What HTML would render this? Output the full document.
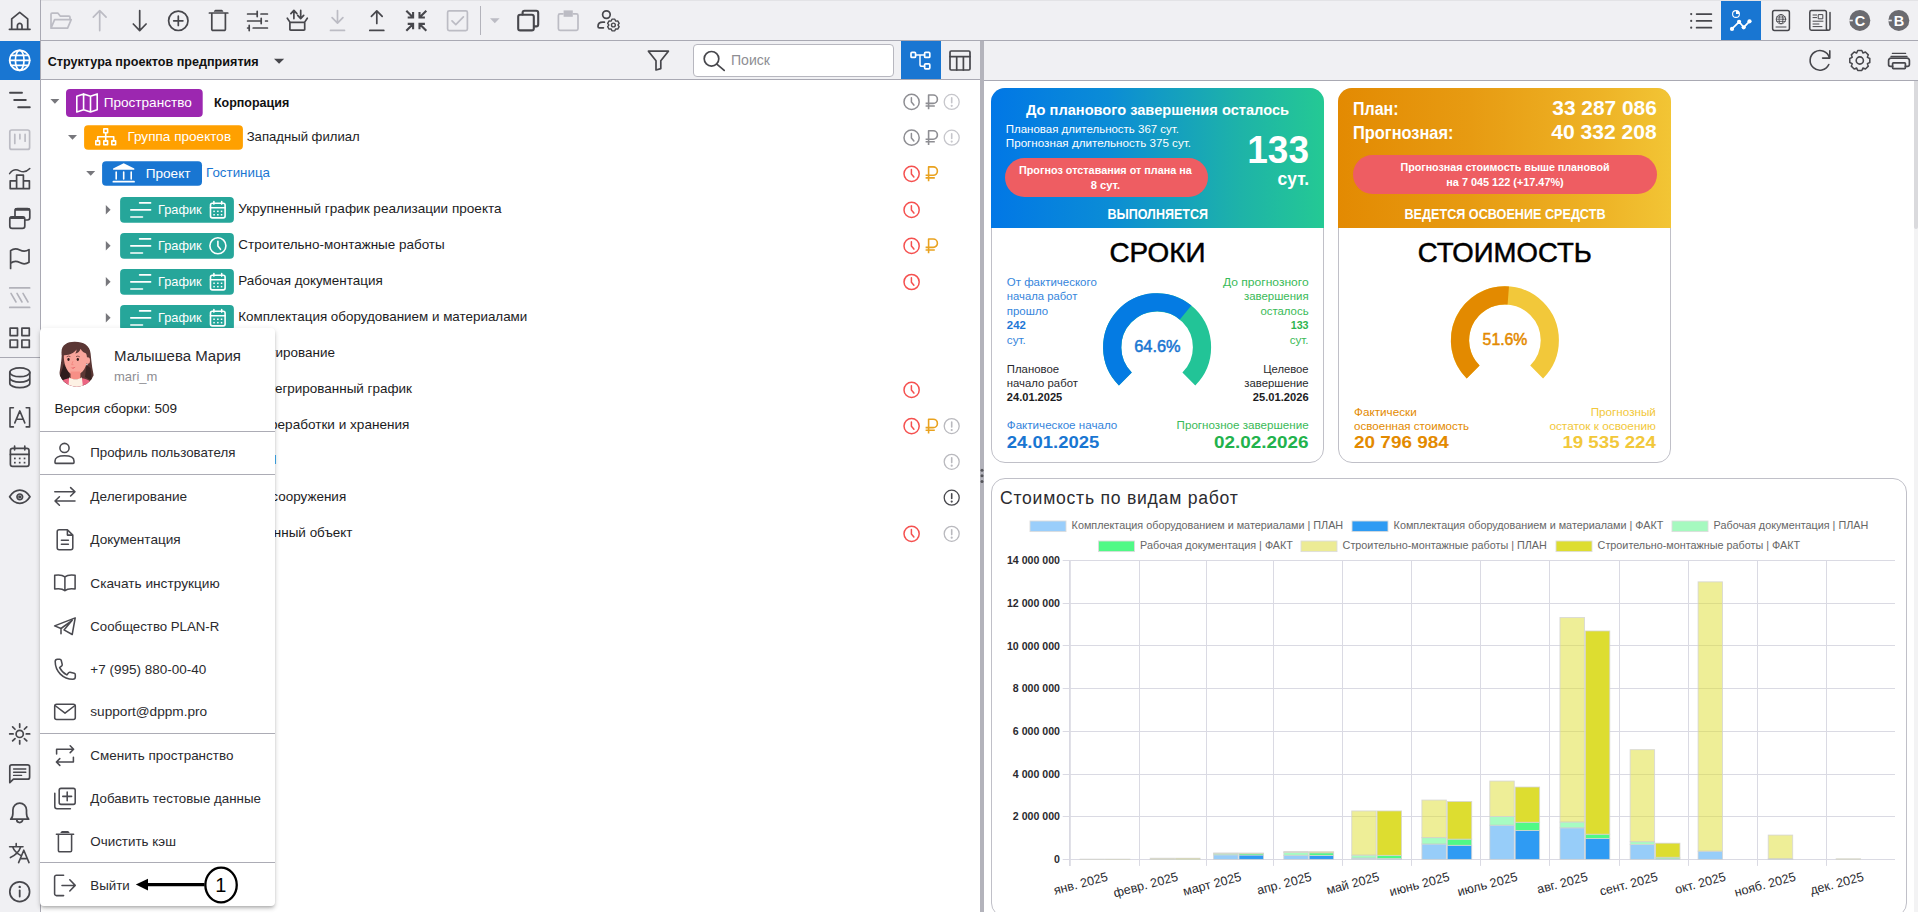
<!DOCTYPE html><html lang="ru"><head><meta charset="utf-8"><title>PLAN-R</title><style>
*{box-sizing:border-box;margin:0;padding:0}
html,body{width:1918px;height:915px;overflow:hidden;background:#fff;font-family:"Liberation Sans",sans-serif;color:#1c1c1e}
.abs{position:absolute}
#top{position:absolute;left:0;top:0;width:1918px;height:41px;background:#f0f0f3;border-bottom:1px solid #a9a9b3;border-top:1px solid #e3e3e6}
#side{position:absolute;left:0;top:0;width:41px;height:915px;background:#f0f0f3;border-right:1px solid #a9a9b3}
#lbar{position:absolute;left:41px;top:41px;width:939px;height:39px;background:#f0f0f3;border-bottom:1px solid #a9a9b3}
#rbar{position:absolute;left:984px;top:41px;width:934px;height:40px;background:#f0f0f3;border-bottom:1px solid #a9a9b3}
#split{position:absolute;left:980px;top:41px;width:4px;height:874px;background:#b3b3bb}
#lpanel{position:absolute;left:41px;top:80px;width:939px;height:835px;background:#fff;overflow:hidden}
#rpanel{position:absolute;left:984px;top:81px;width:934px;height:834px;background:#fff;overflow:hidden}
svg{position:absolute;overflow:visible}
.ic{fill:none;stroke:#47474c;stroke-width:1.7;stroke-linecap:round;stroke-linejoin:round}
.icd{fill:none;stroke:#b9b9c1;stroke-width:1.7;stroke-linecap:round;stroke-linejoin:round}
.t{position:absolute;white-space:nowrap;line-height:1}
</style></head><body>
<div id="top"></div><div id="side"></div><div id="lbar"></div><div id="rbar"></div><div id="lpanel"></div><div id="rpanel"></div><div id="split"></div>
<div class="abs" style="left:0;top:41px;width:40px;height:39px;background:#1976d2"></div>
<div class="abs" style="left:0;top:357px;width:40px;height:1px;background:#a9a9b3"></div>
<div class="abs" style="left:1721px;top:1px;width:40px;height:39px;background:#1976d2"></div>
<div class="abs" style="left:901px;top:41px;width:39.500px;height:38px;background:#1976d2"></div>
<div class="abs" style="left:693px;top:44px;width:201px;height:33px;background:#fff;border:1px solid #b7b7bf;border-radius:4px"></div>
<div class="abs" style="left:480px;top:6px;width:1px;height:29px;background:#b3b3bb"></div>
<svg style="left:0;top:0" width="1918" height="912" viewBox="0 0 1918 912" font-family="Liberation Sans">
<g transform="translate(19.7,20.5)" fill="none" stroke="#47474c" stroke-width="1.700" stroke-linecap="round" stroke-linejoin="round"><path d="M-10.300 8.800 h20.600 M-8 8.800 v-10.400 l8 -6.600 l8 6.600 v10.400 M-2.300 8.800 v-3.600 a2.300 2.300 0 0 1 4.600 0 v3.600"/></g>
<g transform="translate(19.7,60.3)" fill="none" stroke="#fff" stroke-width="1.700" stroke-linecap="round" stroke-linejoin="round"><circle r="10"/><ellipse rx="4.300" ry="10"/><path d="M-10 0 h20 M-8.700 -5 h17.400 M-8.700 5 h17.400"/></g>
<g transform="translate(0.0,0.0)" fill="none" stroke="#47474c" stroke-width="1.700" stroke-linecap="round" stroke-linejoin="round"><path d="M10 92.800 h12 M14.200 100 h11.600 M18.200 107.200 h11.600" stroke-width="1.900"/></g>
<g transform="translate(0.0,0.0)" fill="none" stroke="#bcbcc4" stroke-width="1.700" stroke-linecap="round" stroke-linejoin="round"><rect x="9.800" y="130" width="19.800" height="19.400" rx="2"/><path d="M14.800 134.400 v9 M19.900 134.400 v4.400 M25.100 134.400 v6.800"/></g>
<g transform="translate(0.0,0.0)" fill="none" stroke="#47474c" stroke-width="1.700" stroke-linecap="round" stroke-linejoin="round"><path d="M10.200 188.600 v-7.800 h6.400 v7.800 M16.600 180.800 v-5.600 h6.800 v13.400 M23.400 180.800 h6 v7.800 M10.200 188.600 h19.200"/><path d="M9.600 173.600 c3 -4 6.400 -4.600 10 -2.800 s7.200 1 10.200 -2.200" stroke-width="1.500"/></g>
<g transform="translate(0.0,0.0)" fill="none" stroke="#47474c" stroke-width="1.700" stroke-linecap="round" stroke-linejoin="round"><path d="M15 216 v-5 a2.400 2.400 0 0 1 2.400 -2.400 h10 a2.400 2.400 0 0 1 2.400 2.400 v6.600 a2.400 2.400 0 0 1 -2.400 2.400 h-1.800"/><path d="M16 209.400 h12.800" stroke-width="2.600"/><rect x="9.800" y="216.800" width="15" height="11.600" rx="2.400"/><path d="M11 217.800 h12.600" stroke-width="2.600"/></g>
<g transform="translate(0.0,0.0)" fill="none" stroke="#47474c" stroke-width="1.700" stroke-linecap="round" stroke-linejoin="round"><path d="M10.600 268.400 v-17.800 c3.400 -2.600 6.200 -2.200 9.200 -0.600 s6 1.800 9.200 -0.400 v12.600 c-3.200 2.200 -6.200 2 -9.200 0.400 s-5.800 -2 -9.200 0.600"/></g>
<g transform="translate(0.0,0.0)" fill="none" stroke="#b2b2ba" stroke-width="1.700" stroke-linecap="round" stroke-linejoin="round"><path d="M9.800 287.900 h19.800 M9.800 307.400 h19.800" stroke-width="1.800"/><path d="M11 293.400 l5 8.600 M17 293.400 l5 8.600 M23 293.400 l5 8.600" stroke-width="1.600"/></g>
<g transform="translate(0.0,0.0)" fill="none" stroke="#47474c" stroke-width="1.700" stroke-linecap="round" stroke-linejoin="round"><rect x="10.100" y="328.200" width="7.400" height="7.400"/><rect x="21.900" y="328.200" width="7.400" height="7.400"/><rect x="10.100" y="340" width="7.400" height="7.400"/><rect x="21.900" y="340" width="7.400" height="7.400"/></g>
<g transform="translate(19.8,0.0)" fill="none" stroke="#47474c" stroke-width="1.700" stroke-linecap="round" stroke-linejoin="round"><ellipse cx="0" cy="372.300" rx="10" ry="4.400"/><path d="M-10 372.300 v11 c0 2.400 4.500 4.400 10 4.400 s10 -2 10 -4.400 v-11 M-10 377.800 c0 2.400 4.500 4.400 10 4.400 s10 -2 10 -4.400"/></g>
<g transform="translate(19.8,417.3)" fill="none" stroke="#47474c" stroke-width="1.700" stroke-linecap="round" stroke-linejoin="round"><path d="M-6.400 -9.600 h-3.400 v19.200 h3.400 M6.400 -9.600 h3.400 v19.200 h-3.400 M-5 5.600 l5 -12 l5 12 M-3.400 2 h6.800" stroke-width="1.600"/></g>
<g transform="translate(0.0,0.0)" fill="none" stroke="#47474c" stroke-width="1.700" stroke-linecap="round" stroke-linejoin="round"><rect x="10.400" y="448.400" width="18.600" height="18" rx="2.200"/><path d="M10.400 454.400 h18.600 M14.600 446.200 v3.600 M24.800 446.200 v3.600"/><g stroke="none" fill="#47474c"><rect x="14" y="457.600" width="1.700" height="1.700"/><rect x="18.850" y="457.600" width="1.700" height="1.700"/><rect x="23.700" y="457.600" width="1.700" height="1.700"/><rect x="14" y="461.800" width="1.700" height="1.700"/><rect x="18.850" y="461.800" width="1.700" height="1.700"/><rect x="23.700" y="461.800" width="1.700" height="1.700"/></g></g>
<g transform="translate(19.8,496.8)" fill="none" stroke="#47474c" stroke-width="1.700" stroke-linecap="round" stroke-linejoin="round"><path d="M-10.200 0 c2.800 -4.400 6.200 -6.600 10.200 -6.600 s7.400 2.200 10.200 6.600 c-2.800 4.400 -6.200 6.600 -10.200 6.600 s-7.400 -2.200 -10.200 -6.600z"/><circle r="2.800"/><circle r="0.800" fill="#47474c"/></g>
<g transform="translate(19.7,733.9)" fill="none" stroke="#47474c" stroke-width="1.700" stroke-linecap="round" stroke-linejoin="round"><circle r="3.600"/><path d="M6.60 0.00 L10.00 0.00"/><path d="M4.67 4.67 L7.07 7.07"/><path d="M0.00 6.60 L0.00 10.00"/><path d="M-4.67 4.67 L-7.07 7.07"/><path d="M-6.60 0.00 L-10.00 0.00"/><path d="M-4.67 -4.67 L-7.07 -7.07"/><path d="M-0.00 -6.60 L-0.00 -10.00"/><path d="M4.67 -4.67 L7.07 -7.07"/></g>
<g transform="translate(0.0,0.0)" fill="none" stroke="#47474c" stroke-width="1.700" stroke-linecap="round" stroke-linejoin="round"><path d="M9.800 782.600 v-15.800 a2 2 0 0 1 2 -2 h15.800 a2 2 0 0 1 2 2 v10.400 a2 2 0 0 1 -2 2 h-14.200z"/><path d="M13.600 769 h12.200 M13.600 772.200 h12.200 M13.600 775.400 h8" stroke-width="1.400"/></g>
<g transform="translate(19.7,0.0)" fill="none" stroke="#47474c" stroke-width="1.700" stroke-linecap="round" stroke-linejoin="round"><path d="M-9 819.200 c1.600 -1.200 2.200 -3 2.200 -6.200 v-3 a6.800 6.800 0 0 1 13.600 0 v3 c0 3.200 0.600 5 2.200 6.200z M-3 819.600 a3 3 0 0 0 6 0"/></g>
<g transform="translate(0.0,0.0)" fill="none" stroke="#47474c" stroke-width="1.700" stroke-linecap="round" stroke-linejoin="round"><path d="M9.600 846.800 h13.400 M16.200 843.600 v3.200 M20.800 846.800 c-1.600 4.600 -5.200 8.400 -10.400 10.800 M12.600 846.800 c1.200 3.400 4 6.400 8 8.600 M18.600 862.600 l5.200 -12.400 l5.200 12.400 M20.400 858.600 h6.800" stroke-width="1.600"/></g>
<g transform="translate(19.7,891.7)" fill="none" stroke="#47474c" stroke-width="1.700" stroke-linecap="round" stroke-linejoin="round"><circle r="9.900"/><path d="M0 -1.200 v6" stroke-width="1.800"/><circle cy="-4.800" r="0.600" stroke-width="1.200"/></g>
<g transform="translate(0.0,0.0)" fill="none" stroke="#bcbcc4" stroke-width="1.700" stroke-linecap="round" stroke-linejoin="round"><path d="M51 28.200 v-14 a1 1 0 0 1 1 -1 h6 l2.400 3 h8.600 a1 1 0 0 1 1 1 v2.600 M51 28.200 l3.600 -8.600 h16.600 l-3.600 8.600z"/></g>
<g transform="translate(99.7,0.0)" fill="none" stroke="#bcbcc4" stroke-width="1.700" stroke-linecap="round" stroke-linejoin="round"><path d="M0 30.600 v-19.800 M-6.400 17.200 l6.400 -6.600 l6.400 6.600"/></g>
<g transform="translate(139.7,0.0)" fill="none" stroke="#47474c" stroke-width="1.700" stroke-linecap="round" stroke-linejoin="round"><path d="M0 10.600 v19.800 M-6.400 24 l6.400 6.600 l6.400 -6.600"/></g>
<g transform="translate(178.3,20.8)" fill="none" stroke="#47474c" stroke-width="1.700" stroke-linecap="round" stroke-linejoin="round"><circle r="9.700"/><path d="M-4.600 0 h9.200 M0 -4.600 v9.200"/></g>
<g transform="translate(218.6,0.0)" fill="none" stroke="#47474c" stroke-width="1.700" stroke-linecap="round" stroke-linejoin="round"><path d="M-9.200 13 h18.400 M-6.800 13 v16.200 a1.200 1.200 0 0 0 1.200 1.200 h11.200 a1.200 1.200 0 0 0 1.200 -1.200 v-16.200"/><path d="M-4.800 11.800 c0.400 -1.400 1.200 -2 2.400 -2 h4.800 c1.200 0 2 0.600 2.400 2z" fill="#47474c" stroke="none"/></g>
<g transform="translate(0.0,0.0)" fill="none" stroke="#47474c" stroke-width="1.700" stroke-linecap="round" stroke-linejoin="round"><path d="M247.600 14 h9.600 M261 14 h6.400 M257.200 11.400 v5.200 M247.600 21 h13.600 M265.600 21 h1.800 M261.200 18.400 v5.200 M247.600 28 h1.600 M253.200 28 h14.200 M249.200 25.400 v5.200"/></g>
<g transform="translate(297.3,0.0)" fill="none" stroke="#47474c" stroke-width="1.700" stroke-linecap="round" stroke-linejoin="round"><path d="M-7.400 22.400 v7 a0.800 0.800 0 0 0 0.800 0.800 h13.200 a0.800 0.800 0 0 0 0.800 -0.800 v-7 M-10 18.200 l2.800 4.200 h14.400 l2.800 -4.200 M-3.400 18.600 v-8 M-6.400 13.600 l3 -3.200 l3 3.200 M3.400 10.400 v8 M0.400 15.400 l3 3.200 l3 -3.200"/></g>
<g transform="translate(337.5,0.0)" fill="none" stroke="#bcbcc4" stroke-width="1.700" stroke-linecap="round" stroke-linejoin="round"><path d="M0 10.600 v12.400 M-5.400 17.600 l5.400 5.600 l5.400 -5.600 M-7 30.400 h14"/></g>
<g transform="translate(376.8,0.0)" fill="none" stroke="#47474c" stroke-width="1.700" stroke-linecap="round" stroke-linejoin="round"><path d="M0 23.400 v-12.400 M-5.400 16.400 l5.400 -5.600 l5.400 5.600 M-7 30.400 h14"/></g>
<g transform="translate(416.3,20.7)" fill="none" stroke="#47474c" stroke-width="1.700" stroke-linecap="round" stroke-linejoin="round"><path d="M-10 -10 l6.800 6.800 M-3.200 -8.600 v5.400 h-5.400 M10 -10 l-6.800 6.800 M3.200 -8.600 v5.400 h5.400 M-10 10 l6.800 -6.800 M-3.200 8.600 v-5.400 h-5.400 M10 10 l-6.800 -6.800 M3.200 8.600 v-5.400 h5.400" stroke-linecap="butt" stroke-linejoin="miter" stroke-width="2.1"/></g>
<g transform="translate(0.0,0.0)" fill="none" stroke="#bcbcc4" stroke-width="1.700" stroke-linecap="round" stroke-linejoin="round"><rect x="447.600" y="10.800" width="19.800" height="19.800" rx="1.600"/><path d="M452 20.800 l3.800 3.800 l7.600 -7.800"/></g>
<path d="M490 18.200 h9.600 l-4.800 5z" fill="#bcbcc4"/>
<g transform="translate(0.0,0.0)" fill="none" stroke="#47474c" stroke-width="1.700" stroke-linecap="round" stroke-linejoin="round"><rect x="518.200" y="14.800" width="15.600" height="15.600" rx="2" stroke-width="2.1"/><path d="M522.600 14.400 v-1.600 a2 2 0 0 1 2 -2 h11.600 a2 2 0 0 1 2 2 v11.600 a2 2 0 0 1 -2 2 h-1.800" stroke-width="2.1"/></g>
<g transform="translate(0.0,0.0)" fill="none" stroke="#bcbcc4" stroke-width="1.700" stroke-linecap="round" stroke-linejoin="round"><path d="M563 13.800 h-3 a1.600 1.600 0 0 0 -1.600 1.600 v13.400 a1.600 1.600 0 0 0 1.600 1.600 h16.400 a1.600 1.600 0 0 0 1.600 -1.600 v-13.400 a1.600 1.600 0 0 0 -1.600 -1.600 h-3"/><rect x="563.600" y="10.400" width="9.200" height="6.400" fill="#bcbcc4" stroke="none"/></g>
<g transform="translate(0.0,0.0)" fill="none" stroke="#47474c" stroke-width="1.700" stroke-linecap="round" stroke-linejoin="round"><circle cx="606.400" cy="14.600" r="3.800"/><path d="M604.400 22.200 h-1.600 c-3 0 -4.800 1.800 -4.800 4.200 c0 0.800 0.600 1.400 1.400 1.400 h4"/><path d="M619.16 26.68 L617.73 29.15 L616.00 28.91 L615.49 29.21 L614.83 30.83 L611.97 30.83 L611.31 29.21 L610.80 28.91 L609.07 29.15 L607.64 26.68 L608.71 25.30 L608.71 24.70 L607.64 23.32 L609.07 20.85 L610.80 21.09 L611.31 20.79 L611.97 19.17 L614.83 19.17 L615.49 20.79 L616.00 21.09 L617.73 20.85 L619.16 23.32 L618.09 24.70 L618.09 25.30z" stroke-width="1.400" fill="#f0f0f3"/><circle cx="613.400" cy="25" r="1.900" stroke-width="1.400"/></g>
<text x="47.7" y="65.6" font-size="13.5" font-weight="bold" fill="#111" text-anchor="start" textLength="211.0" lengthAdjust="spacingAndGlyphs" >Структура проектов предприятия</text>
<path d="M274 58.800 h10.200 l-5.100 5z" fill="#47474c"/>
<g transform="translate(0.0,0.0)" fill="none" stroke="#47474c" stroke-width="1.700" stroke-linecap="round" stroke-linejoin="round"><path d="M648.400 51.200 h20 l-7.600 9.600 v7.800 l-4.800 1.400 v-9.200z"/></g>
<g transform="translate(0.0,0.0)" fill="none" stroke="#47474c" stroke-width="1.700" stroke-linecap="round" stroke-linejoin="round"><circle cx="711.500" cy="58.800" r="7.300"/><path d="M716.800 64.200 l7.400 6.200"/></g>
<text x="731.0" y="65.4" font-size="14" font-weight="normal" fill="#8e8e93" text-anchor="start" textLength="39.0" lengthAdjust="spacingAndGlyphs" >Поиск</text>
<g transform="translate(0.0,0.0)" fill="none" stroke="#fff" stroke-width="1.700" stroke-linecap="round" stroke-linejoin="round"><rect x="911" y="52.400" width="4.600" height="5" rx="1"/><rect x="924.600" y="52.400" width="5.200" height="5" rx="1"/><rect x="924.600" y="63.800" width="5.200" height="5" rx="1"/><path d="M915.600 54.900 h9 M920 54.900 v9.600 a1.800 1.800 0 0 0 1.800 1.800 h2.800" stroke-width="1.500"/></g>
<g transform="translate(0.0,0.0)" fill="none" stroke="#47474c" stroke-width="1.700" stroke-linecap="round" stroke-linejoin="round"><rect x="950" y="51" width="20" height="19" rx="1.200"/><path d="M950 56.600 h20 M956.700 56.600 v13.400 M963.400 56.600 v13.400"/></g>
<g transform="translate(0.0,0.0)" fill="none" stroke="#47474c" stroke-width="1.700" stroke-linecap="round" stroke-linejoin="round"><path d="M1696.600 14.100 h14.800 M1696.600 20.900 h14.800 M1696.600 27.700 h14.800" stroke-width="1.700"/><g fill="#47474c" stroke="none"><circle cx="1691.200" cy="14.100" r="1.100"/><circle cx="1691.200" cy="20.900" r="1.100"/><circle cx="1691.200" cy="27.700" r="1.100"/></g></g>
<g transform="translate(0.0,0.0)" fill="none" stroke="#fff" stroke-width="1.700" stroke-linecap="round" stroke-linejoin="round"><path d="M1732 28.900 L1739.100 21.800 L1743.700 27.300 L1749.500 21.300" stroke-width="1.700"/><g fill="#fff" stroke="none"><circle cx="1732" cy="28.900" r="2.100"/><circle cx="1739.100" cy="21.800" r="2.100"/><circle cx="1743.700" cy="27.300" r="2.100"/><circle cx="1749.500" cy="21.300" r="2.100"/></g><circle cx="1736" cy="14" r="3.400" stroke-width="1.100"/><path d="M1736 14 v-3.400 a3.400 3.400 0 0 1 3.400 3.400z" fill="#fff" stroke="none"/></g>
<g transform="translate(0.0,0.0)" fill="none" stroke="#47474c" stroke-width="1.700" stroke-linecap="round" stroke-linejoin="round"><rect x="1772.600" y="10.600" width="16.800" height="19.800" rx="1.800" stroke-width="1.500"/><circle cx="1781" cy="19.200" r="4.700" stroke-width="0.900"/><ellipse cx="1781" cy="19.200" rx="2" ry="4.700" stroke-width="0.800"/><path d="M1776.300 19.200 h9.400 M1776.800 17 h8.400 M1776.800 21.400 h8.400" stroke-width="0.800"/><path d="M1776 27 h10" stroke-width="1"/></g>
<g transform="translate(0.0,0.0)" fill="none" stroke="#47474c" stroke-width="1.700" stroke-linecap="round" stroke-linejoin="round"><path d="M1826.400 30.200 h-15 a1.600 1.600 0 0 1 -1.600 -1.600 v-16.400 a1.600 1.600 0 0 1 1.600 -1.600 h13.400 a1.600 1.600 0 0 1 1.600 1.600 v16.200 a1.800 1.800 0 0 0 3.600 0 v-15.800" stroke-width="1.500"/><rect x="1818.600" y="14.600" width="4.200" height="4.200" stroke-width="1"/><path d="M1813 15 h3.600 M1813 17.600 h3.600 M1813 21.200 h10 M1813 24 h6 M1813 26.600 h9" stroke-width="1"/></g>
<circle cx="1859.8" cy="20.400" r="10.500" fill="#6b6b70"/>
<rect x="1849.2" y="19.700" width="3.600" height="1.600" fill="#f0f0f3"/>
<text x="1860.1" y="25.6" font-size="14.5" font-weight="bold" fill="#fff" text-anchor="middle" >С</text>
<circle cx="1898.8" cy="20.400" r="10.500" fill="#6b6b70"/>
<rect x="1888.2" y="19.700" width="3.600" height="1.600" fill="#f0f0f3"/>
<text x="1899.1" y="25.6" font-size="14.5" font-weight="bold" fill="#fff" text-anchor="middle" >В</text>
<g transform="translate(1819.8,60.5)" fill="none" stroke="#47474c" stroke-width="1.700" stroke-linecap="round" stroke-linejoin="round"><path d="M9.600 -2.600 a9.800 9.800 0 1 0 -0.600 6.600 M10 -9.600 v7.200 h-7.200" stroke-width="1.600"/></g>
<g transform="translate(1859.8,60.5)" fill="none" stroke="#47474c" stroke-width="1.700" stroke-linecap="round" stroke-linejoin="round"><path d="M10.00 -2.03 L10.00 2.03 L7.58 3.12 L7.57 3.16 L8.50 5.64 L5.64 8.50 L3.16 7.57 L3.12 7.58 L2.03 10.00 L-2.03 10.00 L-3.12 7.58 L-3.16 7.57 L-5.64 8.50 L-8.50 5.64 L-7.57 3.16 L-7.58 3.12 L-10.00 2.03 L-10.00 -2.03 L-7.58 -3.12 L-7.57 -3.16 L-8.50 -5.64 L-5.64 -8.50 L-3.16 -7.57 L-3.12 -7.58 L-2.03 -10.00 L2.03 -10.00 L3.12 -7.58 L3.16 -7.57 L5.64 -8.50 L8.50 -5.64 L7.57 -3.16 L7.58 -3.12z" stroke-width="1.500" stroke-linejoin="round"/><circle r="3.600" stroke-width="1.600"/></g>
<g transform="translate(0.0,0.0)" fill="none" stroke="#47474c" stroke-width="1.700" stroke-linecap="round" stroke-linejoin="round"><path d="M1892.400 53.400 h13.200 M1891 56.400 h16" stroke-width="1.300"/><path d="M1892.600 66.400 h-2.200 a1.800 1.800 0 0 1 -1.800 -1.800 v-4.200 a2.200 2.200 0 0 1 2.200 -2.200 h16.400 a2.200 2.200 0 0 1 2.200 2.200 v4.200 a1.800 1.800 0 0 1 -1.800 1.800 h-2.200"/><rect x="1892.600" y="62.800" width="12.800" height="5.800" rx="0.800"/></g>
</svg>
<svg style="left:0;top:0" width="1918" height="912" viewBox="0 0 1918 912" font-family="Liberation Sans">
<path d="M50.4 99.0 h9 l-4.5 4.8z" fill="#77777c"/>
<rect x="66.0" y="89.1" width="136.7" height="27.8" rx="4" fill="#9c27b0"/>
<path d="M76.8 96.2 l6.8 -2.3 l6.9 2.3 l6.7 -2.3 v15.8 l-6.7 2.3 l-6.9 -2.3 l-6.8 2.3z M83.6 93.9 v15.8 M90.5 96.2 v15.8" fill="none" stroke="#fff" stroke-width="1.6" stroke-linecap="round" stroke-linejoin="round"/>
<text x="103.7" y="106.7" font-size="13.3" font-weight="normal" fill="#fff" text-anchor="start" textLength="88.1" lengthAdjust="spacingAndGlyphs" >Пространство</text>
<text x="213.9" y="106.9" font-size="13.6" font-weight="bold" fill="#111" text-anchor="start" textLength="75.3" lengthAdjust="spacingAndGlyphs" >Корпорация</text>
<path d="M68.0 135.0 h9 l-4.5 4.8z" fill="#77777c"/>
<rect x="84.1" y="125.2" width="158.8" height="24.6" rx="4" fill="#ffa000"/>
<g fill="none" stroke="#fff" stroke-width="1.6" stroke-linecap="round" stroke-linejoin="round"><rect x="103.8" y="128.9" width="3.8" height="3.8"/><rect x="95.8" y="140.9" width="3.8" height="3.8"/><rect x="103.8" y="140.9" width="3.8" height="3.8"/><rect x="111.8" y="140.9" width="3.8" height="3.8"/><path d="M105.7 132.7 v8.2 M97.7 140.9 v-4.1 h16 v4.1"/></g>
<text x="127.4" y="141.3" font-size="13.3" font-weight="normal" fill="#fff" text-anchor="start" textLength="103.7" lengthAdjust="spacingAndGlyphs" >Группа проектов</text>
<text x="246.7" y="141.0" font-size="13.3" font-weight="normal" fill="#1c1c1e" text-anchor="start" textLength="113.0" lengthAdjust="spacingAndGlyphs" >Западный филиал</text>
<path d="M86.2 170.9 h9 l-4.5 4.8z" fill="#77777c"/>
<rect x="102.1" y="161.2" width="99.9" height="24.6" rx="4" fill="#1976d2"/>
<path d="M123.7 163.2 l10.6 5.2 v1.4 h-21.2 v-1.4z" fill="#fff"/><g fill="none" stroke="#fff" stroke-width="1.6" stroke-linecap="round" stroke-linejoin="round" stroke-width="2"><path d="M116.2 172 v7 M123.7 172 v7 M131.2 172 v7"/><path d="M113.4 181.7 h20.6" stroke-width="1.8"/></g>
<text x="145.7" y="177.9" font-size="13.3" font-weight="normal" fill="#fff" text-anchor="start" textLength="44.8" lengthAdjust="spacingAndGlyphs" >Проект</text>
<text x="206.1" y="177.0" font-size="13.3" font-weight="normal" fill="#1976d2" text-anchor="start" textLength="63.9" lengthAdjust="spacingAndGlyphs" >Гостиница</text>
<path d="M105.8 204.9 v9.6 l4.8 -4.8z" fill="#77777c"/>
<rect x="120.1" y="197.1" width="113.8" height="25.7" rx="4" fill="#26a69a"/>
<path d="M139.6 202.9 h11 M130.8 209.9 h19.8 M130.8 217.0 h11.7" fill="none" stroke="#fff" stroke-width="1.6" stroke-linecap="round" stroke-linejoin="round" stroke-width="1.7"/>
<text x="158.0" y="214.1" font-size="13.3" font-weight="normal" fill="#fff" text-anchor="start" textLength="43.7" lengthAdjust="spacingAndGlyphs" >График</text>
<g fill="none" stroke="#fff" stroke-width="1.6" stroke-linecap="round" stroke-linejoin="round" stroke-width="1.4"><rect x="210.5" y="203.3" width="14.6" height="14.6" rx="1.8"/><path d="M210.5 207.7 h14.6 M213.9 201.5 v2.6 M221.7 201.5 v2.6"/></g>
<rect x="213.3" y="210.6" width="1.5" height="1.5" fill="#fff"/><rect x="213.3" y="214.0" width="1.5" height="1.5" fill="#fff"/><rect x="217.1" y="210.6" width="1.5" height="1.5" fill="#fff"/><rect x="217.1" y="214.0" width="1.5" height="1.5" fill="#fff"/><rect x="220.8" y="210.6" width="1.5" height="1.5" fill="#fff"/><rect x="220.8" y="214.0" width="1.5" height="1.5" fill="#fff"/>
<text x="238.3" y="213.0" font-size="13.3" font-weight="normal" fill="#1c1c1e" text-anchor="start" textLength="263.3" lengthAdjust="spacingAndGlyphs" >Укрупненный график реализации проекта</text>
<path d="M105.8 240.9 v9.6 l4.8 -4.8z" fill="#77777c"/>
<rect x="120.1" y="233.1" width="113.8" height="25.7" rx="4" fill="#26a69a"/>
<path d="M139.6 238.9 h11 M130.8 245.9 h19.8 M130.8 253.0 h11.7" fill="none" stroke="#fff" stroke-width="1.6" stroke-linecap="round" stroke-linejoin="round" stroke-width="1.7"/>
<text x="158.0" y="250.1" font-size="13.3" font-weight="normal" fill="#fff" text-anchor="start" textLength="43.7" lengthAdjust="spacingAndGlyphs" >График</text>
<g fill="none" stroke="#fff" stroke-width="1.6" stroke-linecap="round" stroke-linejoin="round" stroke-width="1.5"><circle cx="217.9" cy="245.8" r="8"/><path d="M217.9 241.3 v4.8 l2.6 3.2"/></g>
<text x="238.3" y="249.0" font-size="13.3" font-weight="normal" fill="#1c1c1e" text-anchor="start" textLength="206.4" lengthAdjust="spacingAndGlyphs" >Строительно-монтажные работы</text>
<path d="M105.8 276.9 v9.6 l4.8 -4.8z" fill="#77777c"/>
<rect x="120.1" y="269.0" width="113.8" height="25.7" rx="4" fill="#26a69a"/>
<path d="M139.6 274.9 h11 M130.8 281.9 h19.8 M130.8 289.0 h11.7" fill="none" stroke="#fff" stroke-width="1.6" stroke-linecap="round" stroke-linejoin="round" stroke-width="1.7"/>
<text x="158.0" y="286.1" font-size="13.3" font-weight="normal" fill="#fff" text-anchor="start" textLength="43.7" lengthAdjust="spacingAndGlyphs" >График</text>
<g fill="none" stroke="#fff" stroke-width="1.6" stroke-linecap="round" stroke-linejoin="round" stroke-width="1.4"><rect x="210.5" y="275.3" width="14.6" height="14.6" rx="1.8"/><path d="M210.5 279.7 h14.6 M213.9 273.5 v2.6 M221.7 273.5 v2.6"/></g>
<rect x="213.3" y="282.5" width="1.5" height="1.5" fill="#fff"/><rect x="213.3" y="285.9" width="1.5" height="1.5" fill="#fff"/><rect x="217.1" y="282.5" width="1.5" height="1.5" fill="#fff"/><rect x="217.1" y="285.9" width="1.5" height="1.5" fill="#fff"/><rect x="220.8" y="282.5" width="1.5" height="1.5" fill="#fff"/><rect x="220.8" y="285.9" width="1.5" height="1.5" fill="#fff"/>
<text x="238.3" y="285.0" font-size="13.3" font-weight="normal" fill="#1c1c1e" text-anchor="start" textLength="144.4" lengthAdjust="spacingAndGlyphs" >Рабочая документация</text>
<path d="M105.8 312.9 v9.6 l4.8 -4.8z" fill="#77777c"/>
<rect x="120.1" y="305.0" width="113.8" height="25.7" rx="4" fill="#26a69a"/>
<path d="M139.6 310.9 h11 M130.8 317.9 h19.8 M130.8 325.0 h11.7" fill="none" stroke="#fff" stroke-width="1.6" stroke-linecap="round" stroke-linejoin="round" stroke-width="1.7"/>
<text x="158.0" y="322.1" font-size="13.3" font-weight="normal" fill="#fff" text-anchor="start" textLength="43.7" lengthAdjust="spacingAndGlyphs" >График</text>
<g fill="none" stroke="#fff" stroke-width="1.6" stroke-linecap="round" stroke-linejoin="round" stroke-width="1.4"><rect x="210.5" y="311.3" width="14.6" height="14.6" rx="1.8"/><path d="M210.5 315.7 h14.6 M213.9 309.5 v2.6 M221.7 309.5 v2.6"/></g>
<rect x="213.3" y="318.5" width="1.5" height="1.5" fill="#fff"/><rect x="213.3" y="321.9" width="1.5" height="1.5" fill="#fff"/><rect x="217.1" y="318.5" width="1.5" height="1.5" fill="#fff"/><rect x="217.1" y="321.9" width="1.5" height="1.5" fill="#fff"/><rect x="220.8" y="318.5" width="1.5" height="1.5" fill="#fff"/><rect x="220.8" y="321.9" width="1.5" height="1.5" fill="#fff"/>
<text x="238.3" y="321.0" font-size="13.3" font-weight="normal" fill="#1c1c1e" text-anchor="start" textLength="289.0" lengthAdjust="spacingAndGlyphs" >Комплектация оборудованием и материалами</text>
<text x="335.0" y="357.0" font-size="13.3" font-weight="normal" fill="#1c1c1e" text-anchor="end" textLength="103.8" lengthAdjust="spacingAndGlyphs" >Проектирование</text>
<text x="412.0" y="393.0" font-size="13.3" font-weight="normal" fill="#1c1c1e" text-anchor="end" textLength="160.2" lengthAdjust="spacingAndGlyphs" >Интегрированный график</text>
<text x="409.4" y="429.0" font-size="13.3" font-weight="normal" fill="#1c1c1e" text-anchor="end" textLength="218.5" lengthAdjust="spacingAndGlyphs" >Комплекс переработки и хранения</text>
<text x="346.2" y="500.8" font-size="13.3" font-weight="normal" fill="#1c1c1e" text-anchor="end" textLength="141.1" lengthAdjust="spacingAndGlyphs" >Очистные сооружения</text>
<text x="352.5" y="536.8" font-size="13.3" font-weight="normal" fill="#1c1c1e" text-anchor="end" textLength="181.1" lengthAdjust="spacingAndGlyphs" >Законсервированный объект</text>
<text x="276.7" y="464.0" font-size="13.3" font-weight="normal" fill="#1976d2" text-anchor="end" >Корпус Н</text>
<g fill="none" stroke="#8e8e93" stroke-width="1.5" stroke-linecap="round" stroke-linejoin="round"><circle cx="911.6" cy="101.9" r="7.6"/><path d="M911.4 97.7 v4.4 l2.5 3"/></g>
<g fill="none" stroke="#8e8e93" stroke-width="1.6" stroke-linejoin="round"><path d="M928.6 109.3 v-14.3 h4.6 a4.2 4.2 0 0 1 0 8.4 h-7.6 M925.6 106.0 h9.2"/></g>
<g fill="none" stroke="#c6c6cb" stroke-width="1.3" stroke-linecap="round"><circle cx="951.7" cy="101.9" r="7.5"/><path d="M951.7 97.9 v4.8" stroke-width="1.6"/><circle cx="951.7" cy="105.8" r="0.5" stroke-width="1.2"/></g>
<g fill="none" stroke="#8e8e93" stroke-width="1.5" stroke-linecap="round" stroke-linejoin="round"><circle cx="911.6" cy="137.7" r="7.6"/><path d="M911.4 133.5 v4.4 l2.5 3"/></g>
<g fill="none" stroke="#8e8e93" stroke-width="1.6" stroke-linejoin="round"><path d="M928.6 145.1 v-14.3 h4.6 a4.2 4.2 0 0 1 0 8.4 h-7.6 M925.6 141.8 h9.2"/></g>
<g fill="none" stroke="#c6c6cb" stroke-width="1.3" stroke-linecap="round"><circle cx="951.7" cy="137.7" r="7.5"/><path d="M951.7 133.7 v4.8" stroke-width="1.6"/><circle cx="951.7" cy="141.6" r="0.5" stroke-width="1.2"/></g>
<g fill="none" stroke="#f5504f" stroke-width="1.5" stroke-linecap="round" stroke-linejoin="round"><circle cx="911.6" cy="173.8" r="7.6"/><path d="M911.4 169.6 v4.4 l2.5 3"/></g>
<g fill="none" stroke="#e9a21f" stroke-width="1.6" stroke-linejoin="round"><path d="M928.6 181.2 v-14.3 h4.6 a4.2 4.2 0 0 1 0 8.4 h-7.6 M925.6 177.9 h9.2"/></g>
<g fill="none" stroke="#f5504f" stroke-width="1.5" stroke-linecap="round" stroke-linejoin="round"><circle cx="911.6" cy="209.9" r="7.6"/><path d="M911.4 205.7 v4.4 l2.5 3"/></g>
<g fill="none" stroke="#f5504f" stroke-width="1.5" stroke-linecap="round" stroke-linejoin="round"><circle cx="911.6" cy="245.9" r="7.6"/><path d="M911.4 241.7 v4.4 l2.5 3"/></g>
<g fill="none" stroke="#e9a21f" stroke-width="1.6" stroke-linejoin="round"><path d="M928.6 253.3 v-14.3 h4.6 a4.2 4.2 0 0 1 0 8.4 h-7.6 M925.6 250.0 h9.2"/></g>
<g fill="none" stroke="#f5504f" stroke-width="1.5" stroke-linecap="round" stroke-linejoin="round"><circle cx="911.6" cy="282.0" r="7.6"/><path d="M911.4 277.8 v4.4 l2.5 3"/></g>
<g fill="none" stroke="#f5504f" stroke-width="1.5" stroke-linecap="round" stroke-linejoin="round"><circle cx="911.6" cy="389.9" r="7.6"/><path d="M911.4 385.7 v4.4 l2.5 3"/></g>
<g fill="none" stroke="#f5504f" stroke-width="1.5" stroke-linecap="round" stroke-linejoin="round"><circle cx="911.6" cy="426.1" r="7.6"/><path d="M911.4 421.9 v4.4 l2.5 3"/></g>
<g fill="none" stroke="#e9a21f" stroke-width="1.6" stroke-linejoin="round"><path d="M928.6 433.5 v-14.3 h4.6 a4.2 4.2 0 0 1 0 8.4 h-7.6 M925.6 430.2 h9.2"/></g>
<g fill="none" stroke="#b9b9be" stroke-width="1.3" stroke-linecap="round"><circle cx="951.7" cy="426.1" r="7.5"/><path d="M951.7 422.1 v4.8" stroke-width="1.6"/><circle cx="951.7" cy="430.0" r="0.5" stroke-width="1.2"/></g>
<g fill="none" stroke="#b9b9be" stroke-width="1.3" stroke-linecap="round"><circle cx="951.7" cy="461.8" r="7.5"/><path d="M951.7 457.8 v4.8" stroke-width="1.6"/><circle cx="951.7" cy="465.7" r="0.5" stroke-width="1.2"/></g>
<g fill="none" stroke="#48484d" stroke-width="1.3" stroke-linecap="round"><circle cx="951.7" cy="497.7" r="7.5"/><path d="M951.7 493.7 v4.8" stroke-width="1.6"/><circle cx="951.7" cy="501.6" r="0.5" stroke-width="1.2"/></g>
<g fill="none" stroke="#f5504f" stroke-width="1.5" stroke-linecap="round" stroke-linejoin="round"><circle cx="911.6" cy="533.8" r="7.6"/><path d="M911.4 529.6 v4.4 l2.5 3"/></g>
<g fill="none" stroke="#b9b9be" stroke-width="1.3" stroke-linecap="round"><circle cx="951.7" cy="533.8" r="7.5"/><path d="M951.7 529.8 v4.8" stroke-width="1.6"/><circle cx="951.7" cy="537.7" r="0.5" stroke-width="1.2"/></g>
<circle cx="982" cy="470.2" r="1.5" fill="#55555a"/>
<circle cx="982" cy="475.8" r="1.5" fill="#55555a"/>
<circle cx="982" cy="481.4" r="1.5" fill="#55555a"/>
</svg>
<div class="abs" style="left:991.0px;top:88px;width:333.2px;height:374.6px;border:1px solid #c0c0c8;border-radius:14px;background:#fff"></div>
<div class="abs" style="left:991.0px;top:88px;width:333.2px;height:140px;border-radius:14px 14px 0 0;background:linear-gradient(90deg,#0177e6 0%,#0b8cd6 35%,#1eb3a8 75%,#24c994 100%)"></div>
<div class="abs" style="left:1338.0px;top:88px;width:333.2px;height:374.6px;border:1px solid #c0c0c8;border-radius:14px;background:#fff"></div>
<div class="abs" style="left:1338.0px;top:88px;width:333.2px;height:140px;border-radius:14px 14px 0 0;background:linear-gradient(90deg,#e38a02 0%,#e79b12 40%,#eeb427 80%,#f2c535 100%)"></div>
<div class="abs" style="left:1005.3px;top:158px;width:203.2px;height:39px;border-radius:20px;background:#ee5d62"></div>
<div class="abs" style="left:1353px;top:155px;width:304.4px;height:38.8px;border-radius:20px;background:#ee5d62"></div>
<svg style="left:0;top:0" width="1918" height="912" viewBox="0 0 1918 912" font-family="Liberation Sans">
<text x="1157.5" y="114.5" font-size="14.4" font-weight="bold" fill="#fff" text-anchor="middle" textLength="263.0" lengthAdjust="spacingAndGlyphs" >До планового завершения осталось</text>
<text x="1005.8" y="133.1" font-size="11.7" font-weight="normal" fill="#fff" text-anchor="start" textLength="173.2" lengthAdjust="spacingAndGlyphs" >Плановая длительность 367 сут.</text>
<text x="1005.8" y="147.1" font-size="11.7" font-weight="normal" fill="#fff" text-anchor="start" textLength="185.2" lengthAdjust="spacingAndGlyphs" >Прогнозная длительность 375 сут.</text>
<text x="1309.0" y="162.6" font-size="39" font-weight="bold" fill="#fff" text-anchor="end" textLength="61.7" lengthAdjust="spacingAndGlyphs" >133</text>
<text x="1309.0" y="185.4" font-size="18.8" font-weight="bold" fill="#fff" text-anchor="end" textLength="31.5" lengthAdjust="spacingAndGlyphs" >сут.</text>
<text x="1105.4" y="174.4" font-size="11.2" font-weight="bold" fill="#fff" text-anchor="middle" textLength="173.0" lengthAdjust="spacingAndGlyphs" >Прогноз отставания от плана на</text>
<text x="1105.4" y="188.9" font-size="11.2" font-weight="bold" fill="#fff" text-anchor="middle" >8 сут.</text>
<text x="1157.7" y="218.6" font-size="13.8" font-weight="bold" fill="#fff" text-anchor="middle" textLength="100.6" lengthAdjust="spacingAndGlyphs" >ВЫПОЛНЯЕТСЯ</text>
<text x="1157.5" y="261.9" font-size="27.5" font-weight="normal" fill="#000" text-anchor="middle" textLength="96.0" lengthAdjust="spacingAndGlyphs" stroke="#000" stroke-width="0.5">СРОКИ</text>
<text x="1006.8" y="285.7" font-size="11.7" font-weight="normal" fill="#3585dc" text-anchor="start" textLength="90.0" lengthAdjust="spacingAndGlyphs" >От фактического</text>
<text x="1308.6" y="285.7" font-size="11.7" font-weight="normal" fill="#3aba58" text-anchor="end" textLength="85.6" lengthAdjust="spacingAndGlyphs" >До прогнозного</text>
<text x="1006.8" y="300.2" font-size="11.7" font-weight="normal" fill="#3585dc" text-anchor="start" textLength="70.5" lengthAdjust="spacingAndGlyphs" >начала работ</text>
<text x="1308.6" y="300.2" font-size="11.7" font-weight="normal" fill="#3aba58" text-anchor="end" textLength="64.7" lengthAdjust="spacingAndGlyphs" >завершения</text>
<text x="1006.8" y="314.7" font-size="11.7" font-weight="normal" fill="#3585dc" text-anchor="start" textLength="41.3" lengthAdjust="spacingAndGlyphs" >прошло</text>
<text x="1308.6" y="314.7" font-size="11.7" font-weight="normal" fill="#3aba58" text-anchor="end" textLength="48.2" lengthAdjust="spacingAndGlyphs" >осталось</text>
<text x="1006.8" y="329.2" font-size="11.7" font-weight="bold" fill="#1f78d6" text-anchor="start" textLength="19.0" lengthAdjust="spacingAndGlyphs" >242</text>
<text x="1308.6" y="329.2" font-size="11.7" font-weight="bold" fill="#2fb550" text-anchor="end" textLength="17.9" lengthAdjust="spacingAndGlyphs" >133</text>
<text x="1006.8" y="343.7" font-size="11.7" font-weight="normal" fill="#3585dc" text-anchor="start" textLength="19.0" lengthAdjust="spacingAndGlyphs" >сут.</text>
<text x="1308.6" y="343.7" font-size="11.7" font-weight="normal" fill="#3aba58" text-anchor="end" textLength="18.8" lengthAdjust="spacingAndGlyphs" >сут.</text>
<text x="1006.8" y="372.9" font-size="11.7" font-weight="normal" fill="#2a2a2e" text-anchor="start" textLength="52.3" lengthAdjust="spacingAndGlyphs" >Плановое</text>
<text x="1006.8" y="386.9" font-size="11.7" font-weight="normal" fill="#2a2a2e" text-anchor="start" textLength="71.1" lengthAdjust="spacingAndGlyphs" >начало работ</text>
<text x="1006.8" y="400.7" font-size="11.3" font-weight="bold" fill="#1c1c1e" text-anchor="start" textLength="55.5" lengthAdjust="spacingAndGlyphs" >24.01.2025</text>
<text x="1308.6" y="372.9" font-size="11.7" font-weight="normal" fill="#2a2a2e" text-anchor="end" textLength="45.4" lengthAdjust="spacingAndGlyphs" >Целевое</text>
<text x="1308.6" y="386.9" font-size="11.7" font-weight="normal" fill="#2a2a2e" text-anchor="end" textLength="64.3" lengthAdjust="spacingAndGlyphs" >завершение</text>
<text x="1308.6" y="400.7" font-size="11.3" font-weight="bold" fill="#1c1c1e" text-anchor="end" textLength="55.8" lengthAdjust="spacingAndGlyphs" >25.01.2026</text>
<text x="1006.8" y="429.4" font-size="11.7" font-weight="normal" fill="#3585dc" text-anchor="start" textLength="110.5" lengthAdjust="spacingAndGlyphs" >Фактическое начало</text>
<text x="1308.6" y="429.4" font-size="11.7" font-weight="normal" fill="#3aba58" text-anchor="end" textLength="132.0" lengthAdjust="spacingAndGlyphs" >Прогнозное завершение</text>
<text x="1006.8" y="447.7" font-size="17.4" font-weight="bold" fill="#1976d2" text-anchor="start" textLength="92.5" lengthAdjust="spacingAndGlyphs" >24.01.2025</text>
<text x="1308.6" y="447.7" font-size="17.4" font-weight="bold" fill="#22b24c" text-anchor="end" textLength="94.5" lengthAdjust="spacingAndGlyphs" >02.02.2026</text>
<path d="M1125.35 378.95 A44.90 44.90 0 1 1 1188.85 378.95" fill="none" stroke="#22c497" stroke-width="18.2"/>
<path d="M1125.35 378.95 A44.90 44.90 0 0 1 1185.61 312.51" fill="none" stroke="#047be3" stroke-width="18.2"/>
<text x="1157.4" y="351.8" font-size="16" font-weight="normal" fill="#1976d2" text-anchor="middle" textLength="46.3" lengthAdjust="spacingAndGlyphs" stroke="#1976d2" stroke-width="0.5">64.6%</text>
<text x="1353.0" y="114.5" font-size="17.6" font-weight="bold" fill="#fff" text-anchor="start" textLength="45.5" lengthAdjust="spacingAndGlyphs" >План:</text>
<text x="1353.0" y="138.6" font-size="17.6" font-weight="bold" fill="#fff" text-anchor="start" textLength="100.5" lengthAdjust="spacingAndGlyphs" >Прогнозная:</text>
<text x="1656.8" y="115.0" font-size="19.8" font-weight="bold" fill="#fff" text-anchor="end" textLength="104.5" lengthAdjust="spacingAndGlyphs" >33 287 086</text>
<text x="1656.8" y="139.0" font-size="19.8" font-weight="bold" fill="#fff" text-anchor="end" textLength="105.5" lengthAdjust="spacingAndGlyphs" >40 332 208</text>
<text x="1505.0" y="171.4" font-size="10.8" font-weight="bold" fill="#fff" text-anchor="middle" textLength="209.0" lengthAdjust="spacingAndGlyphs" >Прогнозная стоимость выше плановой</text>
<text x="1505.0" y="186.3" font-size="10.8" font-weight="bold" fill="#fff" text-anchor="middle" textLength="117.5" lengthAdjust="spacingAndGlyphs" >на 7 045 122 (+17.47%)</text>
<text x="1505.0" y="218.6" font-size="13.8" font-weight="bold" fill="#fff" text-anchor="middle" textLength="201.0" lengthAdjust="spacingAndGlyphs" >ВЕДЕТСЯ ОСВОЕНИЕ СРЕДСТВ</text>
<text x="1504.8" y="261.9" font-size="27.5" font-weight="normal" fill="#000" text-anchor="middle" textLength="174.0" lengthAdjust="spacingAndGlyphs" stroke="#000" stroke-width="0.5">СТОИМОСТЬ</text>
<text x="1354.1" y="415.6" font-size="11.7" font-weight="normal" fill="#e38a00" text-anchor="start" >Фактически</text>
<text x="1354.1" y="429.8" font-size="11.7" font-weight="normal" fill="#e38a00" text-anchor="start" textLength="115.0" lengthAdjust="spacingAndGlyphs" >освоенная стоимость</text>
<text x="1354.1" y="447.7" font-size="17.4" font-weight="bold" fill="#e38a00" text-anchor="start" textLength="94.6" lengthAdjust="spacingAndGlyphs" >20 796 984</text>
<text x="1655.9" y="415.6" font-size="11.7" font-weight="normal" fill="#f2c83a" text-anchor="end" >Прогнозный</text>
<text x="1655.9" y="429.8" font-size="11.7" font-weight="normal" fill="#f2c83a" text-anchor="end" textLength="106.5" lengthAdjust="spacingAndGlyphs" >остаток к освоению</text>
<text x="1655.9" y="447.7" font-size="17.4" font-weight="bold" fill="#f2c83a" text-anchor="end" textLength="93.5" lengthAdjust="spacingAndGlyphs" >19 535 224</text>
<path d="M1473.15 372.05 A44.90 44.90 0 1 1 1536.65 372.05" fill="none" stroke="#f2c83a" stroke-width="18.2"/>
<path d="M1473.15 372.05 A44.90 44.90 0 0 1 1508.28 295.53" fill="none" stroke="#e38a00" stroke-width="18.2"/>
<text x="1505.0" y="344.9" font-size="16" font-weight="normal" fill="#e38a00" text-anchor="middle" textLength="44.8" lengthAdjust="spacingAndGlyphs" stroke="#e38a00" stroke-width="0.5">51.6%</text>
</svg>
<div class="abs" style="left:984px;top:81px;width:930px;height:831px;overflow:hidden"><div class="abs" style="left:7px;top:397px;width:916px;height:439px;border:1px solid #c0c0c8;border-radius:14px;background:#fff"></div></div>
<div class="t" style="left:1000px;top:490px;font-size:17.6px;color:#2c2c30;letter-spacing:0.75px">Стоимость по видам работ</div>
<svg style="left:0;top:0" width="1918" height="912" viewBox="0 0 1918 912">
<line x1="1062.7" x2="1895.0" y1="560.50" y2="560.50" stroke="#dadae3" stroke-width="1"/>
<line x1="1062.7" x2="1895.0" y1="603.50" y2="603.50" stroke="#dadae3" stroke-width="1"/>
<line x1="1062.7" x2="1895.0" y1="645.50" y2="645.50" stroke="#dadae3" stroke-width="1"/>
<line x1="1062.7" x2="1895.0" y1="688.50" y2="688.50" stroke="#dadae3" stroke-width="1"/>
<line x1="1062.7" x2="1895.0" y1="731.50" y2="731.50" stroke="#dadae3" stroke-width="1"/>
<line x1="1062.7" x2="1895.0" y1="774.50" y2="774.50" stroke="#dadae3" stroke-width="1"/>
<line x1="1062.7" x2="1895.0" y1="816.50" y2="816.50" stroke="#dadae3" stroke-width="1"/>
<line x1="1062.7" x2="1895.0" y1="859.50" y2="859.50" stroke="#dadae3" stroke-width="1"/>
<line x1="1069.90" x2="1069.90" y1="560.5" y2="865.9" stroke="#dadae3" stroke-width="1.8"/>
<line x1="1139.50" x2="1139.50" y1="560.5" y2="865.9" stroke="#dadae3" stroke-width="1"/>
<line x1="1206.50" x2="1206.50" y1="560.5" y2="865.9" stroke="#dadae3" stroke-width="1"/>
<line x1="1273.50" x2="1273.50" y1="560.5" y2="865.9" stroke="#dadae3" stroke-width="1"/>
<line x1="1342.50" x2="1342.50" y1="560.5" y2="865.9" stroke="#dadae3" stroke-width="1"/>
<line x1="1411.50" x2="1411.50" y1="560.5" y2="865.9" stroke="#dadae3" stroke-width="1"/>
<line x1="1480.50" x2="1480.50" y1="560.5" y2="865.9" stroke="#dadae3" stroke-width="1"/>
<line x1="1549.50" x2="1549.50" y1="560.5" y2="865.9" stroke="#dadae3" stroke-width="1"/>
<line x1="1619.50" x2="1619.50" y1="560.5" y2="865.9" stroke="#dadae3" stroke-width="1"/>
<line x1="1688.50" x2="1688.50" y1="560.5" y2="865.9" stroke="#dadae3" stroke-width="1"/>
<line x1="1757.50" x2="1757.50" y1="560.5" y2="865.9" stroke="#dadae3" stroke-width="1"/>
<line x1="1826.50" x2="1826.50" y1="560.5" y2="865.9" stroke="#dadae3" stroke-width="1"/>
<rect x="1080.08" y="859.14" width="24.45" height="0.30" fill="#dddd30" fill-opacity="0.5" stroke="#d4d4d4" stroke-opacity="0.85" stroke-width="0.9"/>
<rect x="1105.44" y="859.14" width="24.45" height="0.30" fill="#dddd30" fill-opacity="1" stroke="#d4d4d4" stroke-opacity="0.85" stroke-width="0.9"/>
<rect x="1150.26" y="859.19" width="24.45" height="0.30" fill="#50f986" fill-opacity="0.5" stroke="#d4d4d4" stroke-opacity="0.85" stroke-width="0.9"/>
<rect x="1150.26" y="858.23" width="24.45" height="0.96" fill="#dddd30" fill-opacity="0.5" stroke="#d4d4d4" stroke-opacity="0.85" stroke-width="0.9"/>
<rect x="1175.61" y="859.19" width="24.45" height="0.30" fill="#50f986" fill-opacity="1" stroke="#d4d4d4" stroke-opacity="0.85" stroke-width="0.9"/>
<rect x="1175.61" y="858.23" width="24.45" height="0.96" fill="#dddd30" fill-opacity="1" stroke="#d4d4d4" stroke-opacity="0.85" stroke-width="0.9"/>
<rect x="1213.64" y="854.81" width="24.45" height="4.59" fill="#2f9bf3" fill-opacity="0.5" stroke="#d4d4d4" stroke-opacity="0.85" stroke-width="0.9"/>
<rect x="1213.64" y="853.32" width="24.45" height="1.49" fill="#50f986" fill-opacity="0.5" stroke="#d4d4d4" stroke-opacity="0.85" stroke-width="0.9"/>
<rect x="1213.64" y="853.00" width="24.45" height="0.32" fill="#dddd30" fill-opacity="0.5" stroke="#d4d4d4" stroke-opacity="0.85" stroke-width="0.9"/>
<rect x="1238.99" y="855.02" width="24.45" height="4.38" fill="#2f9bf3" fill-opacity="1" stroke="#d4d4d4" stroke-opacity="0.85" stroke-width="0.9"/>
<rect x="1238.99" y="853.53" width="24.45" height="1.49" fill="#50f986" fill-opacity="1" stroke="#d4d4d4" stroke-opacity="0.85" stroke-width="0.9"/>
<rect x="1238.99" y="853.00" width="24.45" height="0.53" fill="#dddd30" fill-opacity="1" stroke="#d4d4d4" stroke-opacity="0.85" stroke-width="0.9"/>
<rect x="1283.81" y="855.34" width="24.45" height="4.06" fill="#2f9bf3" fill-opacity="0.5" stroke="#d4d4d4" stroke-opacity="0.85" stroke-width="0.9"/>
<rect x="1283.81" y="852.35" width="24.45" height="2.99" fill="#50f986" fill-opacity="0.5" stroke="#d4d4d4" stroke-opacity="0.85" stroke-width="0.9"/>
<rect x="1283.81" y="851.50" width="24.45" height="0.85" fill="#dddd30" fill-opacity="0.5" stroke="#d4d4d4" stroke-opacity="0.85" stroke-width="0.9"/>
<rect x="1309.16" y="855.45" width="24.45" height="3.95" fill="#2f9bf3" fill-opacity="1" stroke="#d4d4d4" stroke-opacity="0.85" stroke-width="0.9"/>
<rect x="1309.16" y="852.78" width="24.45" height="2.67" fill="#50f986" fill-opacity="1" stroke="#d4d4d4" stroke-opacity="0.85" stroke-width="0.9"/>
<rect x="1309.16" y="851.71" width="24.45" height="1.07" fill="#dddd30" fill-opacity="1" stroke="#d4d4d4" stroke-opacity="0.85" stroke-width="0.9"/>
<rect x="1351.72" y="858.12" width="24.45" height="1.28" fill="#2f9bf3" fill-opacity="0.5" stroke="#d4d4d4" stroke-opacity="0.85" stroke-width="0.9"/>
<rect x="1351.72" y="855.13" width="24.45" height="2.99" fill="#50f986" fill-opacity="0.5" stroke="#d4d4d4" stroke-opacity="0.85" stroke-width="0.9"/>
<rect x="1351.72" y="810.94" width="24.45" height="44.19" fill="#dddd30" fill-opacity="0.5" stroke="#d4d4d4" stroke-opacity="0.85" stroke-width="0.9"/>
<rect x="1377.07" y="858.55" width="24.45" height="0.85" fill="#2f9bf3" fill-opacity="1" stroke="#d4d4d4" stroke-opacity="0.85" stroke-width="0.9"/>
<rect x="1377.07" y="855.34" width="24.45" height="3.20" fill="#50f986" fill-opacity="1" stroke="#d4d4d4" stroke-opacity="0.85" stroke-width="0.9"/>
<rect x="1377.07" y="810.94" width="24.45" height="44.41" fill="#dddd30" fill-opacity="1" stroke="#d4d4d4" stroke-opacity="0.85" stroke-width="0.9"/>
<rect x="1421.89" y="844.03" width="24.45" height="15.37" fill="#2f9bf3" fill-opacity="0.5" stroke="#d4d4d4" stroke-opacity="0.85" stroke-width="0.9"/>
<rect x="1421.89" y="837.62" width="24.45" height="6.41" fill="#50f986" fill-opacity="0.5" stroke="#d4d4d4" stroke-opacity="0.85" stroke-width="0.9"/>
<rect x="1421.89" y="800.05" width="24.45" height="37.58" fill="#dddd30" fill-opacity="0.5" stroke="#d4d4d4" stroke-opacity="0.85" stroke-width="0.9"/>
<rect x="1447.25" y="845.31" width="24.45" height="14.09" fill="#2f9bf3" fill-opacity="1" stroke="#d4d4d4" stroke-opacity="0.85" stroke-width="0.9"/>
<rect x="1447.25" y="839.12" width="24.45" height="6.19" fill="#50f986" fill-opacity="1" stroke="#d4d4d4" stroke-opacity="0.85" stroke-width="0.9"/>
<rect x="1447.25" y="801.54" width="24.45" height="37.58" fill="#dddd30" fill-opacity="1" stroke="#d4d4d4" stroke-opacity="0.85" stroke-width="0.9"/>
<rect x="1489.80" y="825.24" width="24.45" height="34.16" fill="#2f9bf3" fill-opacity="0.5" stroke="#d4d4d4" stroke-opacity="0.85" stroke-width="0.9"/>
<rect x="1489.80" y="816.49" width="24.45" height="8.75" fill="#50f986" fill-opacity="0.5" stroke="#d4d4d4" stroke-opacity="0.85" stroke-width="0.9"/>
<rect x="1489.80" y="781.05" width="24.45" height="35.44" fill="#dddd30" fill-opacity="0.5" stroke="#d4d4d4" stroke-opacity="0.85" stroke-width="0.9"/>
<rect x="1515.16" y="830.47" width="24.45" height="28.93" fill="#2f9bf3" fill-opacity="1" stroke="#d4d4d4" stroke-opacity="0.85" stroke-width="0.9"/>
<rect x="1515.16" y="822.25" width="24.45" height="8.22" fill="#50f986" fill-opacity="1" stroke="#d4d4d4" stroke-opacity="0.85" stroke-width="0.9"/>
<rect x="1515.16" y="787.02" width="24.45" height="35.23" fill="#dddd30" fill-opacity="1" stroke="#d4d4d4" stroke-opacity="0.85" stroke-width="0.9"/>
<rect x="1559.98" y="827.80" width="24.45" height="31.60" fill="#2f9bf3" fill-opacity="0.5" stroke="#d4d4d4" stroke-opacity="0.85" stroke-width="0.9"/>
<rect x="1559.98" y="822.04" width="24.45" height="5.76" fill="#50f986" fill-opacity="0.5" stroke="#d4d4d4" stroke-opacity="0.85" stroke-width="0.9"/>
<rect x="1559.98" y="617.50" width="24.45" height="204.53" fill="#dddd30" fill-opacity="0.5" stroke="#d4d4d4" stroke-opacity="0.85" stroke-width="0.9"/>
<rect x="1585.33" y="838.48" width="24.45" height="20.92" fill="#2f9bf3" fill-opacity="1" stroke="#d4d4d4" stroke-opacity="0.85" stroke-width="0.9"/>
<rect x="1585.33" y="834.21" width="24.45" height="4.27" fill="#50f986" fill-opacity="1" stroke="#d4d4d4" stroke-opacity="0.85" stroke-width="0.9"/>
<rect x="1585.33" y="630.96" width="24.45" height="203.25" fill="#dddd30" fill-opacity="1" stroke="#d4d4d4" stroke-opacity="0.85" stroke-width="0.9"/>
<rect x="1630.15" y="844.45" width="24.45" height="14.95" fill="#2f9bf3" fill-opacity="0.5" stroke="#d4d4d4" stroke-opacity="0.85" stroke-width="0.9"/>
<rect x="1630.15" y="841.68" width="24.45" height="2.78" fill="#50f986" fill-opacity="0.5" stroke="#d4d4d4" stroke-opacity="0.85" stroke-width="0.9"/>
<rect x="1630.15" y="749.66" width="24.45" height="92.02" fill="#dddd30" fill-opacity="0.5" stroke="#d4d4d4" stroke-opacity="0.85" stroke-width="0.9"/>
<rect x="1655.50" y="858.76" width="24.45" height="0.64" fill="#2f9bf3" fill-opacity="1" stroke="#d4d4d4" stroke-opacity="0.85" stroke-width="0.9"/>
<rect x="1655.50" y="857.26" width="24.45" height="1.49" fill="#50f986" fill-opacity="1" stroke="#d4d4d4" stroke-opacity="0.85" stroke-width="0.9"/>
<rect x="1655.50" y="843.17" width="24.45" height="14.09" fill="#dddd30" fill-opacity="1" stroke="#d4d4d4" stroke-opacity="0.85" stroke-width="0.9"/>
<rect x="1698.06" y="851.18" width="24.45" height="8.22" fill="#2f9bf3" fill-opacity="0.5" stroke="#d4d4d4" stroke-opacity="0.85" stroke-width="0.9"/>
<rect x="1698.06" y="581.85" width="24.45" height="269.33" fill="#dddd30" fill-opacity="0.5" stroke="#d4d4d4" stroke-opacity="0.85" stroke-width="0.9"/>
<rect x="1768.23" y="858.76" width="24.45" height="0.64" fill="#2f9bf3" fill-opacity="0.5" stroke="#d4d4d4" stroke-opacity="0.85" stroke-width="0.9"/>
<rect x="1768.23" y="835.06" width="24.45" height="23.70" fill="#dddd30" fill-opacity="0.5" stroke="#d4d4d4" stroke-opacity="0.85" stroke-width="0.9"/>
<rect x="1836.14" y="858.76" width="24.45" height="0.64" fill="#dddd30" fill-opacity="0.5" stroke="#d4d4d4" stroke-opacity="0.85" stroke-width="0.9"/>
<text x="1060" y="564.2" text-anchor="end" font-size="10.6" font-weight="bold" fill="#2b2b30" font-family="Liberation Sans">14 000 000</text>
<text x="1060" y="606.9" text-anchor="end" font-size="10.6" font-weight="bold" fill="#2b2b30" font-family="Liberation Sans">12 000 000</text>
<text x="1060" y="649.6" text-anchor="end" font-size="10.6" font-weight="bold" fill="#2b2b30" font-family="Liberation Sans">10 000 000</text>
<text x="1060" y="692.3" text-anchor="end" font-size="10.6" font-weight="bold" fill="#2b2b30" font-family="Liberation Sans">8 000 000</text>
<text x="1060" y="735.0" text-anchor="end" font-size="10.6" font-weight="bold" fill="#2b2b30" font-family="Liberation Sans">6 000 000</text>
<text x="1060" y="777.7" text-anchor="end" font-size="10.6" font-weight="bold" fill="#2b2b30" font-family="Liberation Sans">4 000 000</text>
<text x="1060" y="820.4" text-anchor="end" font-size="10.6" font-weight="bold" fill="#2b2b30" font-family="Liberation Sans">2 000 000</text>
<text x="1060" y="863.1" text-anchor="end" font-size="10.6" font-weight="bold" fill="#2b2b30" font-family="Liberation Sans">0</text>
<text transform="translate(1108.5,880.5) rotate(-14.9)" text-anchor="end" font-size="12.6" fill="#2b2b30" font-family="Liberation Sans">янв. 2025</text>
<text transform="translate(1178.7,880.5) rotate(-14.9)" text-anchor="end" font-size="12.6" fill="#2b2b30" font-family="Liberation Sans">февр. 2025</text>
<text transform="translate(1242.0,880.5) rotate(-14.9)" text-anchor="end" font-size="12.6" fill="#2b2b30" font-family="Liberation Sans">март 2025</text>
<text transform="translate(1312.2,880.5) rotate(-14.9)" text-anchor="end" font-size="12.6" fill="#2b2b30" font-family="Liberation Sans">апр. 2025</text>
<text transform="translate(1380.1,880.5) rotate(-14.9)" text-anchor="end" font-size="12.6" fill="#2b2b30" font-family="Liberation Sans">май 2025</text>
<text transform="translate(1450.3,880.5) rotate(-14.9)" text-anchor="end" font-size="12.6" fill="#2b2b30" font-family="Liberation Sans">июнь 2025</text>
<text transform="translate(1518.2,880.5) rotate(-14.9)" text-anchor="end" font-size="12.6" fill="#2b2b30" font-family="Liberation Sans">июль 2025</text>
<text transform="translate(1588.4,880.5) rotate(-14.9)" text-anchor="end" font-size="12.6" fill="#2b2b30" font-family="Liberation Sans">авг. 2025</text>
<text transform="translate(1658.6,880.5) rotate(-14.9)" text-anchor="end" font-size="12.6" fill="#2b2b30" font-family="Liberation Sans">сент. 2025</text>
<text transform="translate(1726.5,880.5) rotate(-14.9)" text-anchor="end" font-size="12.6" fill="#2b2b30" font-family="Liberation Sans">окт. 2025</text>
<text transform="translate(1796.6,880.5) rotate(-14.9)" text-anchor="end" font-size="12.6" fill="#2b2b30" font-family="Liberation Sans">нояб. 2025</text>
<text transform="translate(1864.5,880.5) rotate(-14.9)" text-anchor="end" font-size="12.6" fill="#2b2b30" font-family="Liberation Sans">дек. 2025</text>
<rect x="1030.0" y="521.0" width="36" height="10.6" fill="#9acefb" stroke="#dcdcdc" stroke-width="0.9"/>
<text x="1071.6" y="528.6" font-size="10.8" fill="#666" font-family="Liberation Sans">Комплектация оборудованием и материалами | ПЛАН</text>
<rect x="1352.0" y="521.0" width="36" height="10.6" fill="#2f9bf3" stroke="#dcdcdc" stroke-width="0.9"/>
<text x="1393.6" y="528.6" font-size="10.8" fill="#666" font-family="Liberation Sans">Комплектация оборудованием и материалами | ФАКТ</text>
<rect x="1672.0" y="521.0" width="36" height="10.6" fill="#a5f9bf" stroke="#dcdcdc" stroke-width="0.9"/>
<text x="1713.6" y="528.6" font-size="10.8" fill="#666" font-family="Liberation Sans">Рабочая документация | ПЛАН</text>
<rect x="1098.5" y="541.0" width="36" height="10.6" fill="#50f986" stroke="#dcdcdc" stroke-width="0.9"/>
<text x="1140.1" y="548.6" font-size="10.8" fill="#666" font-family="Liberation Sans">Рабочая документация | ФАКТ</text>
<rect x="1301.0" y="541.0" width="36" height="10.6" fill="#eceb95" stroke="#dcdcdc" stroke-width="0.9"/>
<text x="1342.6" y="548.6" font-size="10.8" fill="#666" font-family="Liberation Sans">Строительно-монтажные работы | ПЛАН</text>
<rect x="1556.0" y="541.0" width="36" height="10.6" fill="#dddd30" stroke="#dcdcdc" stroke-width="0.9"/>
<text x="1597.6" y="548.6" font-size="10.8" fill="#666" font-family="Liberation Sans">Строительно-монтажные работы | ФАКТ</text>
</svg>
<div class="abs" style="left:1914px;top:81px;width:4px;height:831px;background:#f3f3f4"></div>
<div class="abs" style="left:1914px;top:81px;width:4px;height:148px;background:#dadadd;border-radius:0 0 3px 3px"></div>
<div class="abs" style="left:0;top:912px;width:1918px;height:3px;background:#fff"></div>
<div class="abs" style="left:40px;top:328px;width:235.3px;height:578px;background:#fff;border-radius:4px;box-shadow:0 2px 3px -1px rgba(0,0,0,.2),0 3px 4px rgba(0,0,0,.12),0 1px 6px rgba(0,0,0,.09)"></div>
<div class="abs" style="left:40px;top:431px;width:235.3px;height:1px;background:#acacb5"></div>
<div class="abs" style="left:40px;top:474px;width:235.3px;height:1px;background:#acacb5"></div>
<div class="abs" style="left:40px;top:733px;width:235.3px;height:1px;background:#acacb5"></div>
<div class="abs" style="left:40px;top:862px;width:235.3px;height:1px;background:#acacb5"></div>
<svg style="left:0;top:0" width="1918" height="912" viewBox="0 0 1918 912" font-family="Liberation Sans">
<defs><clipPath id="avc"><path d="M58.600 339 H94.900 V368.600 A18.150 18.150 0 0 1 58.600 368.600z"/></clipPath></defs>
<g clip-path="url(#avc)">
<path d="M58.600 380 C59.500 371 62.200 360 61.600 352.500 C61 345 67.500 341.500 75 341.700 C83.500 341.900 89.800 345 90.600 353.500 C91.600 363.500 92.500 372 94.900 379 L95 390 H58z" fill="#5b3735"/>
<path d="M58.800 379.500 C60.500 374 62.500 369 63.800 364 L69.500 374 L70 381 L60 385z" fill="#2e1c1c"/>
<path d="M86.500 365 L85 377 L92 381 L90.500 368z" fill="#3a2423"/>
<path d="M63.800 357 C63.600 350.500 68.500 347.600 75.200 347.800 C82 348 86.800 350.800 87 357.500 C87.200 366 83.500 374.600 75 374.800 C67.800 374.900 64 365.500 63.800 357z" fill="#f9a59b"/>
<ellipse cx="87.700" cy="360.600" rx="2.300" ry="3.300" fill="#f9a59b"/>
<path d="M61.800 355 C61.200 346.500 67.500 343 75 343.200 C82.500 343.400 88 346.300 88.200 353.500 C84.800 353.600 82 351.800 80.600 348.800 C79.800 351.600 78 353 75.200 353.600 C76.200 352.400 76.600 351 76.400 349.600 C74 353.200 68.500 356 61.800 355z" fill="#5b3735"/>
<path d="M70.600 371.500 h9.800 v8 h-9.800z" fill="#f78f86"/>
<path d="M56 392 C57 382 62.500 379.400 69.800 378 L75.500 382 L81.200 378 C88.500 379.400 95 382 96 392z" fill="#ec6582"/>
<path d="M69.200 377.200 C71 378.600 73 379.200 75.500 379.200 C78 379.200 80 378.600 81.800 377.200 L83.600 392 H68z" fill="#fdf1e4"/>
<ellipse cx="68.500" cy="359.500" rx="1.150" ry="1.450" fill="#2a1717"/><ellipse cx="77.800" cy="359.500" rx="1.150" ry="1.450" fill="#2a1717"/>
<path d="M66.600 356.800 q1.900 -1.300 3.800 -0.200 M76 356.600 q1.900 -1.100 3.800 0.200" stroke="#5b3735" stroke-width="0.700" fill="none"/>
<path d="M70.600 367.200 q2.300 1.500 4.900 -0.400 q-1.900 3.300 -4.900 0.400z" fill="#e2434f"/>
<path d="M73 361.200 l-1.300 3.400 h1.800" fill="none" stroke="#f07f78" stroke-width="0.700"/>
<circle cx="86.900" cy="364.600" r="0.800" fill="#dfe9f3"/>
</g>
<text x="114.0" y="360.7" font-size="13.8" font-weight="normal" fill="#2a2a2e" text-anchor="start" textLength="127.0" lengthAdjust="spacingAndGlyphs" >Малышева Мария</text>
<text x="114.0" y="381.0" font-size="12.6" font-weight="normal" fill="#8e8e93" text-anchor="start" textLength="43.4" lengthAdjust="spacingAndGlyphs" >mari_m</text>
<text x="54.4" y="412.9" font-size="13.2" font-weight="normal" fill="#1c1c1e" text-anchor="start" textLength="122.7" lengthAdjust="spacingAndGlyphs" >Версия сборки: 509</text>
<text x="90.3" y="457.3" font-size="13.2" font-weight="normal" fill="#2a2a2e" text-anchor="start" textLength="145.1" lengthAdjust="spacingAndGlyphs" >Профиль пользователя</text>
<text x="90.3" y="500.9" font-size="13.2" font-weight="normal" fill="#2a2a2e" text-anchor="start" textLength="96.9" lengthAdjust="spacingAndGlyphs" >Делегирование</text>
<text x="90.3" y="544.2" font-size="13.2" font-weight="normal" fill="#2a2a2e" text-anchor="start" textLength="90.4" lengthAdjust="spacingAndGlyphs" >Документация</text>
<text x="90.3" y="587.5" font-size="13.2" font-weight="normal" fill="#2a2a2e" text-anchor="start" textLength="129.4" lengthAdjust="spacingAndGlyphs" >Скачать инструкцию</text>
<text x="90.3" y="631.0" font-size="13.2" font-weight="normal" fill="#2a2a2e" text-anchor="start" textLength="129.0" lengthAdjust="spacingAndGlyphs" >Сообщество PLAN-R</text>
<text x="90.3" y="673.7" font-size="13.2" font-weight="normal" fill="#2a2a2e" text-anchor="start" textLength="115.9" lengthAdjust="spacingAndGlyphs" >+7 (995) 880-00-40</text>
<text x="90.3" y="716.4" font-size="13.2" font-weight="normal" fill="#2a2a2e" text-anchor="start" textLength="116.9" lengthAdjust="spacingAndGlyphs" >support@dppm.pro</text>
<text x="90.3" y="760.1" font-size="13.2" font-weight="normal" fill="#2a2a2e" text-anchor="start" textLength="143.1" lengthAdjust="spacingAndGlyphs" >Сменить пространство</text>
<text x="90.3" y="803.1" font-size="13.2" font-weight="normal" fill="#2a2a2e" text-anchor="start" textLength="170.6" lengthAdjust="spacingAndGlyphs" >Добавить тестовые данные</text>
<text x="90.3" y="846.2" font-size="13.2" font-weight="normal" fill="#2a2a2e" text-anchor="start" textLength="85.6" lengthAdjust="spacingAndGlyphs" >Очистить кэш</text>
<text x="90.3" y="889.9" font-size="13.2" font-weight="normal" fill="#2a2a2e" text-anchor="start" textLength="39.5" lengthAdjust="spacingAndGlyphs" >Выйти</text>
<g transform="translate(65,452.8)" fill="none" stroke="#4a4a50" stroke-width="1.55" stroke-linecap="round" stroke-linejoin="round"><circle cx="-0.5" cy="-4.8" r="4.6"/><path d="M-10 9.8 v-1.6 c0 -3.4 3.2 -5.2 9.5 -5.2 s9.5 1.8 9.5 5.2 v1.6 a0.8 0.8 0 0 1 -0.8 0.8 h-17.4 a0.8 0.8 0 0 1 -0.8 -0.8z"/></g>
<g transform="translate(65,496.4)" fill="none" stroke="#4a4a50" stroke-width="1.55" stroke-linecap="round" stroke-linejoin="round"><path d="M-10.2 -4.6 h20 M5.6 -8.8 l4.4 4.2 l-4.4 4.2 M10 4.6 h-20 M-5.6 0.4 l-4.4 4.2 l4.4 4.2"/></g>
<g transform="translate(65,539.7)" fill="none" stroke="#4a4a50" stroke-width="1.55" stroke-linecap="round" stroke-linejoin="round"><path d="M-7.8 -8 a2 2 0 0 1 2 -2 h8.2 l5.4 5.4 v12.6 a2 2 0 0 1 -2 2 h-11.6 a2 2 0 0 1 -2 -2z M2.4 -10 v5.4 h5.4 M-3.6 0.5 h7 M-3.6 4.6 h7"/></g>
<g transform="translate(65,583.0)" fill="none" stroke="#4a4a50" stroke-width="1.55" stroke-linecap="round" stroke-linejoin="round"><path d="M-0.1 -6.2 c-2.2 -1.8 -6 -2.2 -10.2 -1.6 v13.8 c4.2 -0.6 8 -0.2 10.2 1.6 c2.2 -1.8 6 -2.2 10.2 -1.6 v-13.8 c-4.200 -0.6 -8 -0.2 -10.2 1.600z M-0.1 -6.2 v13.800"/></g>
<g transform="translate(65,626.5)" fill="none" stroke="#4a4a50" stroke-width="1.55" stroke-linecap="round" stroke-linejoin="round"><path d="M10.200 -8.6 l-20.600 8 l6.400 2.600 l11.200 -8.200 l-8.200 9.600 l8.200 4.600z M-4 2 v5.200"/></g>
<g transform="translate(65,669.2)" fill="none" stroke="#4a4a50" stroke-width="1.55" stroke-linecap="round" stroke-linejoin="round"><path d="M-9.800 -7.600 c0 -1.400 0.800 -2.400 2.200 -2.400 h2.400 c0.700 0 1.200 0.400 1.400 1.100 l1 4.100 c0.100 0.600 -0.100 1.100 -0.500 1.500 l-2.100 1.800 c1.600 3.200 4 5.600 7.200 7.200 l1.800 -2.100 c0.400 -0.400 0.900 -0.600 1.500 -0.500 l4.100 1 c0.700 0.200 1.100 0.700 1.100 1.400 v2.400 c0 1.400 -1 2.200 -2.400 2.200 c-9.800 0 -17.700 -7.900 -17.700 -17.700z"/></g>
<g transform="translate(65,711.9)" fill="none" stroke="#4a4a50" stroke-width="1.55" stroke-linecap="round" stroke-linejoin="round"><rect x="-10.300" y="-7.600" width="20.600" height="15.200" rx="2"/><path d="M-10 -6.400 l10 7.600 l10 -7.600"/></g>
<g transform="translate(65,755.6)" fill="none" stroke="#4a4a50" stroke-width="1.55" stroke-linecap="round" stroke-linejoin="round"><path d="M-8.400 -1.600 v-4.800 h16.800 M5.200 -9.800 l3.400 3.400 l-3.400 3.400 M8.400 1.600 v4.800 h-16.800 M-5.200 3 l-3.400 3.400 l3.400 3.400"/></g>
<g transform="translate(65,798.6)" fill="none" stroke="#4a4a50" stroke-width="1.55" stroke-linecap="round" stroke-linejoin="round"><rect x="-5.800" y="-10.200" width="16" height="16" rx="1.800"/><path d="M2.200 -6.600 v8.800 M-2.200 -2.200 h8.800 M-10.200 -5.400 v13.400 a2.200 2.200 0 0 0 2.200 2.200 h13.400"/></g>
<g transform="translate(65,841.7)" fill="none" stroke="#4a4a50" stroke-width="1.55" stroke-linecap="round" stroke-linejoin="round"><path d="M-8.600 -7.400 h17.200 M-6.600 -7.400 v16.200 a1.200 1.200 0 0 0 1.200 1.200 h10.800 a1.200 1.200 0 0 0 1.200 -1.200 v-16.200"/><path d="M-4.600 -8.600 c0.400 -1.400 1.200 -2 2.400 -2 h4.400 c1.200 0 2 0.600 2.400 2z" fill="#4a4a50" stroke="none"/></g>
<g transform="translate(65,885.4)" fill="none" stroke="#4a4a50" stroke-width="1.55" stroke-linecap="round" stroke-linejoin="round"><path d="M-1.400 -10.200 h-7.200 a1.800 1.800 0 0 0 -1.800 1.800 v16.800 a1.800 1.800 0 0 0 1.800 1.800 h7.200 M-3 0 h13 M4.800 -5.600 l5.400 5.600 l-5.400 5.600"/></g>
<ellipse cx="221.050" cy="885" rx="15.700" ry="17.400" fill="#fff" stroke="#000" stroke-width="2.300"/>
<path d="M146.500 884.600 H204.500" stroke="#000" stroke-width="3.100" fill="none"/><path d="M135.800 884.600 l12.200 -5.800 v11.600z" fill="#000"/>
<text x="220.8" y="891.6" font-size="20" font-weight="normal" fill="#000" text-anchor="middle" >1</text>
</svg>
</body></html>
